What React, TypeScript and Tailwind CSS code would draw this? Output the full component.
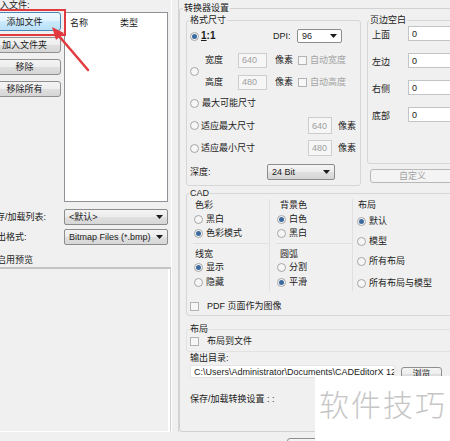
import React from "react";

function Radio({ on = false }: { on?: boolean }) {
  return (
    <span className="flex h-[9px] w-[9px] shrink-0 items-center justify-center rounded-full border border-[#a6a6a6] bg-[#f6f6f6]">
      {on && <span className="h-[5px] w-[5px] rounded-full bg-[#3a6a9e]" />}
    </span>
  );
}

function Check() {
  return <span className="block h-[9px] w-[9px] shrink-0 border border-[#b3b3b3] bg-[#f7f7f7]" />;
}

function Arrow() {
  return (
    <svg width="7" height="4" viewBox="0 0 7 4" className="shrink-0">
      <path d="M0 0 H7 L3.5 4 Z" fill="#1b1b1b" />
    </svg>
  );
}

function Combo({ text, white = false, className = "" }: { text: string; white?: boolean; className?: string }) {
  return (
    <div
      className={
        "flex items-center justify-between rounded-[2px] border border-[#8c8c8c] pl-[4px] pr-[4px] " +
        (white ? "bg-white " : "bg-[linear-gradient(#f4f4f4_0%,#ececec_50%,#e0e0e0_50%,#d6d6d6_100%)] ") +
        className
      }
    >
      <span className="whitespace-nowrap">{text}</span>
      <Arrow />
    </div>
  );
}

function Btn({ children, className = "", hot = false, off = false }: { children?: React.ReactNode; className?: string; hot?: boolean; off?: boolean }) {
  return (
    <div
      className={
        "flex shrink-0 items-center justify-center whitespace-nowrap rounded-[3px] border " +
        (hot
          ? "border-[#4a88b8] bg-[linear-gradient(#f0f9fe_0%,#e0f2fc_50%,#cbeafb_50%,#b9e0f7_100%)] "
          : off
          ? "border-[#b8b8b8] bg-[#f4f4f4] text-[#a3a3a3] "
          : "border-[#8f8f8f] bg-[linear-gradient(#f4f4f4_0%,#ededed_50%,#e0e0e0_50%,#d5d5d5_100%)] ") +
        className
      }
    >
      {children}
    </div>
  );
}

function Field({ text, off = false, className = "" }: { text: string; off?: boolean; className?: string }) {
  return (
    <div
      className={
        "flex shrink-0 items-center border pl-[3px] " +
        (off ? "border-[#cdcdcd] bg-[#f6f6f6] text-[#a0a0a0] " : "border-[#c2c4c8] bg-white ") +
        className
      }
    >
      {text}
    </div>
  );
}

function RadioRow({ on = false, label, className = "" }: { on?: boolean; label: string; className?: string }) {
  return (
    <div className={"flex items-center " + className}>
      <Radio on={on} />
      <span className="ml-[3px] whitespace-nowrap">{label}</span>
    </div>
  );
}

export default function App() {
  return (
    <div className="relative flex h-[441px] w-[450px] overflow-hidden bg-[#f0f0f0] font-['Liberation_Sans','Noto_Sans_CJK_SC',sans-serif] text-[9px] leading-[12px] text-[#1b1b1b]">
      {/* file list panel */}
      <div className="flex h-[432px] w-[179px] shrink-0">
        <div className="flex w-[171px] shrink-0 flex-col">
          <div className="-mt-[1px] h-[13px] shrink-0 whitespace-nowrap -indent-[9px]">导入文件:</div>
          <div className="flex h-[190px] shrink-0">
            <div className="-ml-[12px] flex w-[73px] shrink-0 flex-col">
              <Btn hot className="h-[19px] w-full">添加文件</Btn>
              <Btn className="mt-[6px] h-[16px] w-full">加入文件夹</Btn>
              <Btn className="mt-[6px] h-[16px] w-full">移除</Btn>
              <Btn className="mt-[6px] h-[16px] w-full">移除所有</Btn>
            </div>
            <div className="ml-[3px] flex w-[104px] flex-col border border-[#8e9297] bg-white">
              <div className="flex h-[20px] items-center">
                <span className="w-[55px] pl-[5px]">名称</span>
                <span>类型</span>
              </div>
            </div>
          </div>
          <div className="mt-[7px] flex h-[16px] shrink-0 items-center">
            <div className="w-[64px] shrink-0 whitespace-nowrap -indent-[13px]">保存/加载列表:</div>
            <Combo text="<默认>" className="h-[16px] w-[104px]" />
          </div>
          <div className="mt-[4px] flex h-[16px] shrink-0 items-center">
            <div className="w-[64px] shrink-0 whitespace-nowrap -indent-[12px]">输出格式:</div>
            <Combo text="Bitmap Files (*.bmp)" className="h-[16px] w-[104px]" />
          </div>
          <div className="mt-[9px] h-[12px] shrink-0 whitespace-nowrap -indent-[3px]">启用预览</div>
          <div className="mt-[1px] h-[165px] w-[171px] shrink-0 border-t-2 border-r border-b border-t-[#c4c4c4] border-r-[#cfcfcf] border-b-white shadow-[inset_-2px_0_0_#ffffff]" />
        </div>
        <div className="w-[8px] border-l border-r border-l-white border-r-[#d4d4d4]" />
      </div>

      {/* converter settings */}
      <div className="flex flex-1 flex-col">
        <fieldset className="mt-[2px] h-[430px] w-[285px] shrink-0 rounded-[3px] border border-[#d2d2d2]">
          <legend className="ml-[3px] px-[1px] leading-[12px]">转换器设置</legend>

          <div className="flex h-[172px]">
            {/* image size */}
            <fieldset className="ml-[6px] h-[172px] w-[175px] shrink-0 rounded-[3px] border border-[#d6d6d6]">
              <legend className="ml-[2px] px-[1px] leading-[12px]">格式尺寸</legend>
              <div className="flex flex-col pl-[3px]">
                <div className="mt-[2px] flex h-[16px] items-center">
                  <Radio on />
                  <span className="ml-[2px] w-[72px] text-[10px] font-bold">
                    <span className="underline">1</span>:1
                  </span>
                  <span className="w-[24px]">DPI:</span>
                  <Combo white text="96" className="h-[14px] w-[45px]" />
                </div>

                <div className="mt-[8px] flex">
                  <div className="flex w-[15px] items-center">
                    <Radio />
                  </div>
                  <div className="flex flex-col gap-[6px]">
                    <div className="flex h-[16px] items-center">
                      <span className="w-[33px]">宽度</span>
                      <Field off text="640" className="h-[15px] w-[29px]" />
                      <span className="ml-[8px] w-[23px]">像素</span>
                      <Check />
                      <span className="ml-[3px] text-[#a3a3a3]">自动宽度</span>
                    </div>
                    <div className="flex h-[16px] items-center">
                      <span className="w-[33px]">高度</span>
                      <Field off text="480" className="h-[15px] w-[29px]" />
                      <span className="ml-[8px] w-[23px]">像素</span>
                      <Check />
                      <span className="ml-[3px] text-[#a3a3a3]">自动高度</span>
                    </div>
                  </div>
                </div>

                <RadioRow label="最大可能尺寸" className="mt-[5px] h-[16px]" />

                <div className="mt-[6px] flex h-[17px] items-center">
                  <Radio />
                  <span className="ml-[2px] w-[107px]">适应最大尺寸</span>
                  <Field off text="640" className="h-[17px] w-[24px]" />
                  <span className="ml-[6px]">像素</span>
                </div>
                <div className="mt-[6px] flex h-[16px] items-center">
                  <Radio />
                  <span className="ml-[2px] w-[107px]">适应最小尺寸</span>
                  <Field off text="480" className="h-[16px] w-[24px]" />
                  <span className="ml-[6px]">像素</span>
                </div>

                <div className="mt-[8px] flex h-[16px] items-center">
                  <span className="w-[77px]">深度:</span>
                  <Combo text="24 Bit" className="h-[16px] w-[68px]" />
                </div>
              </div>
            </fieldset>

            {/* page margins */}
            <div className="ml-[6px] flex w-[95px] shrink-0 flex-col">
              <fieldset className="h-[150px] shrink-0 rounded-[3px] border border-[#d6d6d6]">
                <legend className="ml-[1px] px-[1px] leading-[12px]">页边空白</legend>
                <div className="flex flex-col gap-[12px] pl-[4px]">
                  {["上面", "左边", "右侧", "底部"].map((s) => (
                    <div key={s} className="flex h-[15px] items-center">
                      <span className="mt-[3px] w-[36px]">{s}</span>
                      <Field text="0" className="h-[15px] flex-1" />
                    </div>
                  ))}
                </div>
              </fieldset>
              <Btn off className="ml-[3px] mt-[5px] h-[14px] w-[85px]">自定义</Btn>
            </div>
          </div>

          {/* CAD options */}
          <fieldset className="ml-[6px] mt-[1px] h-[129px] w-[275px] rounded-[3px] border border-[#d6d6d6]">
            <legend className="ml-[2px] px-[1px] leading-[12px]">CAD</legend>
            <div className="flex h-[92px]">
              <div className="ml-[6px] flex w-[77px] flex-col">
                <div className="flex h-[45px] flex-col border-r border-b border-[#e0e0e0] pl-[1px]">
                  <span className="ml-[1px]">色彩</span>
                  <RadioRow label="黑白" className="mt-[2px] h-[12px]" />
                  <RadioRow on label="色彩模式" className="mt-[2px] h-[12px]" />
                </div>
                <div className="flex flex-1 flex-col border-r border-[#e0e0e0] pl-[1px] pt-[4px]">
                  <span className="ml-[1px]">线宽</span>
                  <RadioRow on label="显示" className="mt-[1px] h-[12px]" />
                  <RadioRow label="隐藏" className="mt-[3px] h-[12px]" />
                </div>
              </div>
              <div className="ml-[6px] flex w-[77px] flex-col">
                <div className="flex h-[45px] flex-col border-r border-b border-[#e0e0e0] pl-[1px]">
                  <span className="ml-[3px]">背景色</span>
                  <RadioRow on label="白色" className="mt-[2px] h-[12px]" />
                  <RadioRow label="黑白" className="mt-[2px] h-[12px]" />
                </div>
                <div className="flex flex-1 flex-col border-r border-[#e0e0e0] pl-[1px] pt-[4px]">
                  <span className="ml-[3px]">圆弧</span>
                  <RadioRow label="分割" className="mt-[1px] h-[12px]" />
                  <RadioRow on label="平滑" className="mt-[3px] h-[12px]" />
                </div>
              </div>
              <div className="ml-[4px] flex flex-col">
                <span className="ml-[1px]">布局</span>
                <RadioRow on label="默认" className="mt-[4px] h-[12px]" />
                <RadioRow label="模型" className="mt-[8px] h-[12px]" />
                <RadioRow label="所有布局" className="mt-[8px] h-[12px]" />
                <RadioRow label="所有布局与模型" className="mt-[10px] h-[12px]" />
              </div>
            </div>
            <div className="mt-[9px] flex h-[12px] items-center pl-[3px]">
              <Check />
              <span className="ml-[8px]">PDF 页面作为图像</span>
            </div>
          </fieldset>

          {/* layout export */}
          <fieldset className="ml-[6px] mt-[7px] h-[29px] w-[275px] rounded-[3px] border border-[#e2e2e2]">
            <legend className="ml-[2px] px-[1px] leading-[12px]">布局</legend>
            <div className="flex h-[12px] items-center pl-[3px]">
              <Check />
              <span className="ml-[8px]">布局到文件</span>
            </div>
          </fieldset>

          <div className="mt-[1px] h-[11px] pl-[10px] leading-[11px]">输出目录:</div>
          <div className="flex h-[18px]">
            <Field
              text="C:\Users\Administrator\Documents\CADEditorX 12\E"
              className="ml-[10px] mt-[1px] h-[13px] w-[205px] overflow-hidden whitespace-nowrap border-[#e4e4e4]"
            />
            <Btn className="ml-[6px] mt-[3px] h-[14px] w-[41px]">浏览</Btn>
          </div>
          <div className="mt-[11px] h-[12px] pl-[10px]">保存/加载转换设置 : :</div>
        </fieldset>
        <Btn className="ml-[108px] mt-[6px] h-[14px] w-[60px]" />
      </div>

      {/* watermark */}
      <div className="absolute left-[315px] top-[376px] h-[65px] w-[135px] bg-white pl-[4px] pt-[12px] font-['Noto_Sans_CJK_SC',sans-serif] text-[30px] font-light leading-[30px] tracking-[2px] text-[#c6c6c6]">
        软件技巧
      </div>

      {/* red annotation */}
      <svg className="pointer-events-none absolute left-0 top-0" width="450" height="441" viewBox="0 0 450 441">
        <rect x="-6" y="10" width="71" height="25" fill="none" stroke="#e23b3f" strokeWidth="2" />
        <line x1="88" y1="70" x2="59" y2="36" stroke="#e23b3f" strokeWidth="2.5" strokeLinecap="round" />
        <polygon points="52,27 64,33 56,40" fill="#e23b3f" />
      </svg>
    </div>
  );
}
